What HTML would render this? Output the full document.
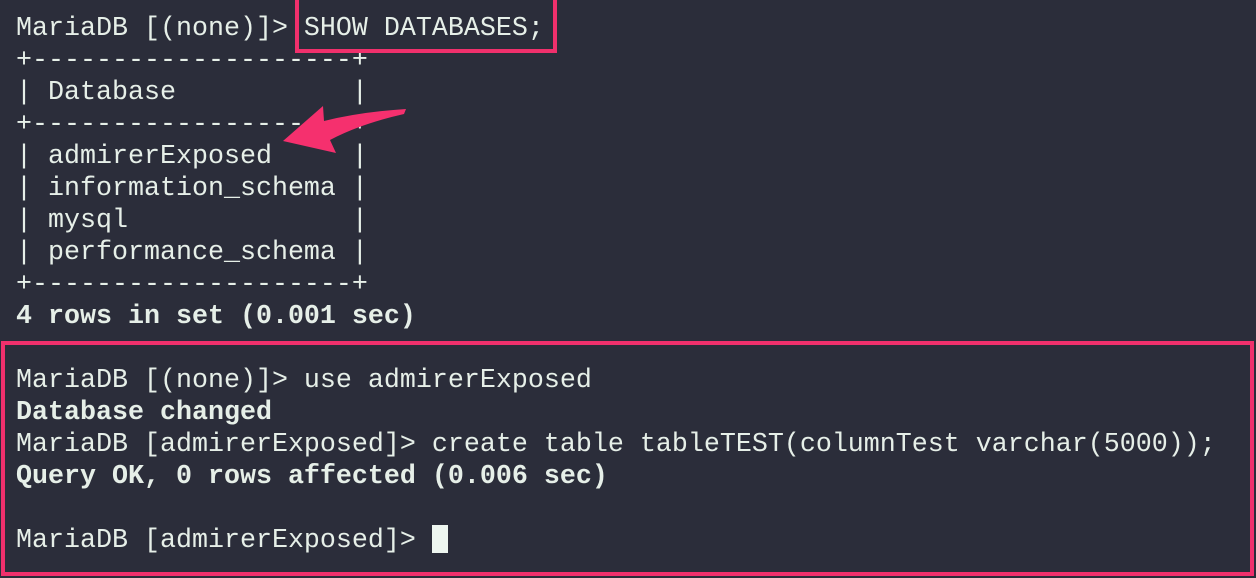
<!DOCTYPE html>
<html><head><meta charset="utf-8"><style>
html,body{margin:0;padding:0;}
body{width:1256px;height:578px;background:#2b2d3a;position:relative;overflow:hidden;}
pre{position:absolute;left:16px;margin:0;font-family:"Liberation Mono",monospace;font-size:26.67px;line-height:32px;color:#e6efe8;}
b{font-weight:bold;}
.box{position:absolute;border:4px solid #f0306c;box-sizing:border-box;}
</style></head><body>
<pre style="top:13px">MariaDB [(none)]&gt; SHOW DATABASES;
+--------------------+
| Database           |
+--------------------+
| admirerExposed     |
| information_schema |
| mysql              |
| performance_schema |
+--------------------+
<b>4 rows in set (0.001 sec)</b></pre>
<pre style="top:365px">MariaDB [(none)]&gt; use admirerExposed
<b>Database changed</b>
MariaDB [admirerExposed]&gt; create table tableTEST(columnTest varchar(5000));
<b>Query OK, 0 rows affected (0.006 sec)</b>

MariaDB [admirerExposed]&gt; </pre>
<div style="position:absolute;left:432px;top:525px;width:16px;height:28px;background:#eef6f0"></div>
<div class="box" style="left:295px;top:-4px;width:262px;height:57px"></div>
<div class="box" style="left:1px;top:341px;width:1253px;height:235px"></div>
<svg style="position:absolute;left:0;top:0" width="1256" height="578"><path fill="#f5306e" d="M283,141 L323,106 L324,121 Q360,112 406,109 L404,114 Q360,124 330,140 L336,153 Z"/></svg>
</body></html>
